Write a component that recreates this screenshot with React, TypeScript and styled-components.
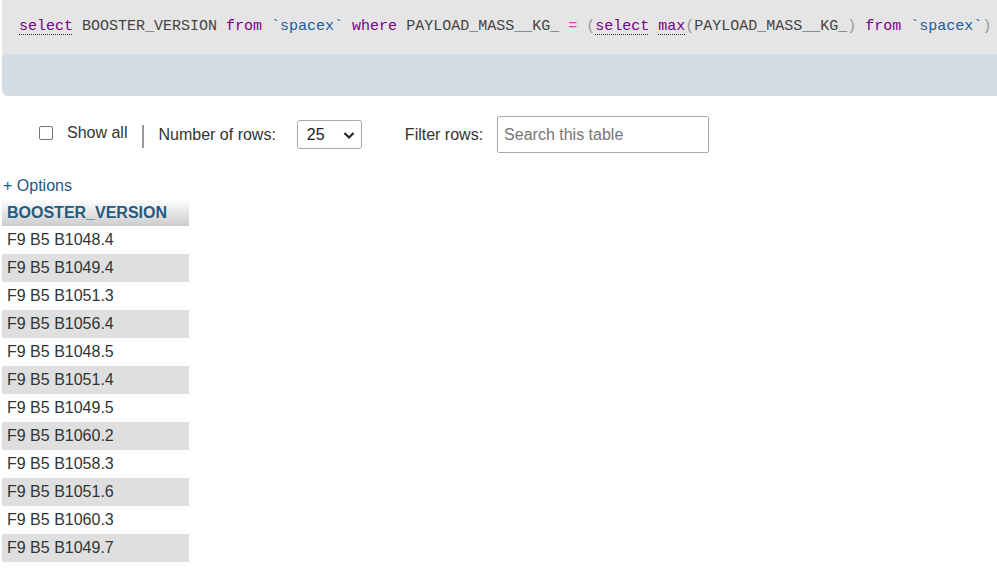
import React from "react";
import styled, { createGlobalStyle } from "styled-components";

const Global = createGlobalStyle`
  html, body { margin: 0; padding: 0; background: #fff; }
  body { font-family: "Liberation Sans", Arial, sans-serif; color: #333; overflow: hidden; }
`;

const Page = styled.div`
  width: 997px;
  height: 577px;
  display: flex;
  flex-direction: column;
`;

const SqlBox = styled.div`
  margin-left: 2px;
  display: flex;
  flex-direction: column;
  border-bottom-left-radius: 6px;
  overflow: hidden;
`;

const Query = styled.div`
  height: 54px;
  background: #e5e5e5;
  display: flex;
  align-items: center;
  padding: 0 0 2px 17px;
  box-sizing: border-box;
  font-family: "Liberation Mono", "DejaVu Sans Mono", monospace;
  font-size: 15px;
  color: #444;
  white-space: pre;
`;

const QueryFooter = styled.div`
  height: 42px;
  background: #d5dde4;
`;

type TokKind = "kw" | "link" | "name" | "op" | "paren" | "plain";
const colors: Record<TokKind, string> = {
  kw: "#770088",
  link: "#770088",
  name: "#1f5c9e",
  op: "#cc44cc",
  paren: "#999",
  plain: "#444",
};

const Tok = styled.span<{ $kind: TokKind }>`
  color: ${(p) => colors[p.$kind]};
  ${(p) =>
    p.$kind === "link"
      ? `text-decoration: underline dotted #333; text-underline-offset: 4px; text-decoration-thickness: 1px;`
      : ""}
`;

const Controls = styled.div`
  margin-top: 20px;
  height: 37px;
  display: flex;
  align-items: center;
  padding-left: 39px;
  font-size: 16px;
  color: #333;
`;

const ShowAll = styled.label`
  display: flex;
  align-items: center;
  gap: 14px;
  margin-bottom: 3px;
`;

const Check = styled.span`
  width: 12px;
  height: 12px;
  border: 1px solid #767676;
  border-radius: 2px;
  background: #fff;
`;

const Sep = styled.span`
  width: 2px;
  height: 23px;
  background: #999;
  margin: 3px 14px 0 15px;
`;

const Label = styled.span<{ $gap: number }>`
  margin-right: ${(p) => p.$gap}px;
`;

const Select = styled.div`
  width: 65px;
  height: 29px;
  box-sizing: border-box;
  border: 1px solid #aaa;
  border-radius: 3px;
  display: flex;
  align-items: center;
  justify-content: space-between;
  padding: 0 5px 0 9px;
  margin-right: 43px;
  background: #fff;
  color: #222;
`;

const Input = styled.div`
  width: 212px;
  height: 37px;
  box-sizing: border-box;
  border: 1px solid #aaa;
  border-radius: 2px;
  display: flex;
  align-items: center;
  padding-left: 6px;
  color: #757575;
`;

const Options = styled.div`
  margin-top: 23px;
  padding-left: 3px;
  height: 20px;
  line-height: 20px;
  font-size: 16px;
  color: #235a81;
`;

const Table = styled.div`
  margin-top: 3px;
  margin-left: 2px;
  width: 187px;
  display: flex;
  flex-direction: column;
`;

const HeadCell = styled.div`
  height: 27px;
  box-sizing: border-box;
  padding-left: 5px;
  display: flex;
  align-items: center;
  font-weight: bold;
  font-size: 16px;
  color: #235a81;
  background: linear-gradient(#ffffff, #cccccc);
`;

const Row = styled.div<{ $odd: boolean }>`
  height: 28px;
  box-sizing: border-box;
  padding-left: 5px;
  display: flex;
  align-items: center;
  font-size: 16px;
  color: #333;
  background: ${(p) => (p.$odd ? "#dfdfdf" : "#fff")};
`;

const tokens: [string, TokKind][] = [
  ["select", "link"],
  [" BOOSTER_VERSION ", "plain"],
  ["from", "kw"],
  [" ", "plain"],
  ["`spacex`", "name"],
  [" ", "plain"],
  ["where", "kw"],
  [" PAYLOAD_MASS__KG_ ", "plain"],
  ["=", "op"],
  [" ", "plain"],
  ["(", "paren"],
  ["select", "link"],
  [" ", "plain"],
  ["max", "link"],
  ["(", "paren"],
  ["PAYLOAD_MASS__KG_", "plain"],
  [")", "paren"],
  [" ", "plain"],
  ["from", "kw"],
  [" ", "plain"],
  ["`spacex`", "name"],
  [")", "paren"],
];

const rows = [
  "F9 B5 B1048.4",
  "F9 B5 B1049.4",
  "F9 B5 B1051.3",
  "F9 B5 B1056.4",
  "F9 B5 B1048.5",
  "F9 B5 B1051.4",
  "F9 B5 B1049.5",
  "F9 B5 B1060.2",
  "F9 B5 B1058.3",
  "F9 B5 B1051.6",
  "F9 B5 B1060.3",
  "F9 B5 B1049.7",
];

export default function App() {
  return (
    <Page>
      <Global />
      <SqlBox>
        <Query>
          {tokens.map(([t, k], i) => (
            <Tok key={i} $kind={k}>
              {t}
            </Tok>
          ))}
        </Query>
        <QueryFooter />
      </SqlBox>
      <Controls>
        <ShowAll>
          <Check />
          <span>Show all</span>
        </ShowAll>
        <Sep />
        <Label $gap={21}>Number of rows:</Label>
        <Select>
          <span>25</span>
          <svg width="14" height="14" viewBox="0 0 14 14">
            <path d="M2.5 5 L7 9.5 L11.5 5" fill="none" stroke="#222" strokeWidth="2.2" />
          </svg>
        </Select>
        <Label $gap={14}>Filter rows:</Label>
        <Input>Search this table</Input>
      </Controls>
      <Options>+ Options</Options>
      <Table>
        <HeadCell>BOOSTER_VERSION</HeadCell>
        {rows.map((r, i) => (
          <Row key={i} $odd={i % 2 === 1}>
            {r}
          </Row>
        ))}
      </Table>
    </Page>
  );
}
